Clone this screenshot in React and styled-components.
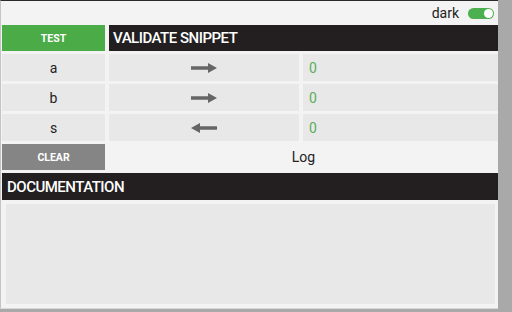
import React, { useState } from 'react';
import styled, { createGlobalStyle } from 'styled-components';

const GlobalStyle = createGlobalStyle`
  html, body {
    margin: 0;
    padding: 0;
    background: #a9a9a9;
    font-family: Roboto, "Liberation Sans", sans-serif;
  }
`;

const Panel = styled.div`
  width: 496px;
  height: 307px;
  background: #f3f3f3;
  border-top: 1px solid #2a2a2a;
  border-left: 1px solid #c4c4c4;
  border-bottom: 1px solid #d8d8d8;
  padding: 0 0 0 1px;
  box-sizing: content-box;
  display: flex;
  flex-direction: column;
`;

const TopBar = styled.div`
  height: 24px;
  display: flex;
  align-items: center;
  justify-content: flex-end;
  gap: 9px;
  padding-right: 4px;
  font-size: 14px;
  color: #222;
`;

const Toggle = styled.button`
  width: 26px;
  height: 11px;
  border: none;
  border-radius: 6px;
  padding: 0;
  background: ${({ on }) => (on ? '#4caf50' : '#bbb')};
  position: relative;
  cursor: pointer;
  &::after {
    content: '';
    position: absolute;
    top: 1px;
    left: ${({ on }) => (on ? '16px' : '1px')};
    width: 9px;
    height: 9px;
    border-radius: 50%;
    background: #fff;
  }
`;

const Grid = styled.div`
  display: grid;
  grid-template-columns: 103px 190px 1fr;
  grid-template-rows: 26px 27px 27px 27px 26px;
  column-gap: 4px;
  row-gap: 3px;
`;

const ActionButton = styled.div`
  background: ${({ tone }) => tone};
  color: #fff;
  font-size: 10.5px;
  font-weight: 700;
  display: flex;
  align-items: center;
  justify-content: center;
`;

const Header = styled.div`
  background: #231f20;
  color: #fff;
  font-size: 15px;
  font-weight: 500;
  letter-spacing: -0.5px;
  display: flex;
  align-items: center;
  padding-left: ${({ pad }) => pad || 4}px;
  grid-column: ${({ span }) => span || 'auto'};
`;

const Cell = styled.div`
  background: #e8e8e8;
  display: flex;
  align-items: center;
  justify-content: ${({ align }) => align || 'center'};
  padding-left: ${({ align }) => (align ? '6px' : '0')};
  font-size: 14px;
  color: ${({ green }) => (green ? '#5cae5c' : '#222')};
`;

const LogCell = styled.div`
  grid-column: 2 / 4;
  display: flex;
  align-items: center;
  justify-content: center;
  font-size: 14px;
  color: #222;
`;

const DocHeader = styled(Header)`
  height: 27px;
  margin-top: 3px;
  flex-shrink: 0;
`;

const DocBody = styled.div`
  margin: 4px 3px 4px 4px;
  background: #e8e8e8;
  flex: 1;
`;

const Arrow = ({ left }) => (
  <svg width="26" height="10" viewBox="0 0 26 10" style={{ transform: left ? 'scaleX(-1)' : 'none' }}>
    <path d="M0 3.2 H17 V0 L26 5 L17 10 V6.8 H0 Z" fill="#666" />
  </svg>
);

const rows = [
  { name: 'a', dir: 'right' },
  { name: 'b', dir: 'right' },
  { name: 's', dir: 'left' },
];

export default function App() {
  const [dark, setDark] = useState(true);
  return (
    <>
      <GlobalStyle />
      <Panel>
        <TopBar>
          dark
          <Toggle on={dark ? 1 : 0} onClick={() => setDark(!dark)} />
        </TopBar>
        <Grid>
          <ActionButton tone="#4aab47">TEST</ActionButton>
          <Header span="2 / 4">VALIDATE SNIPPET</Header>
          {rows.map((r) => (
            <React.Fragment key={r.name}>
              <Cell>{r.name}</Cell>
              <Cell>
                <Arrow left={r.dir === 'left'} />
              </Cell>
              <Cell align="flex-start" green>0</Cell>
            </React.Fragment>
          ))}
          <ActionButton tone="#858585">CLEAR</ActionButton>
          <LogCell>Log</LogCell>
        </Grid>
        <DocHeader pad={5}>DOCUMENTATION</DocHeader>
        <DocBody />
      </Panel>
    </>
  );
}
